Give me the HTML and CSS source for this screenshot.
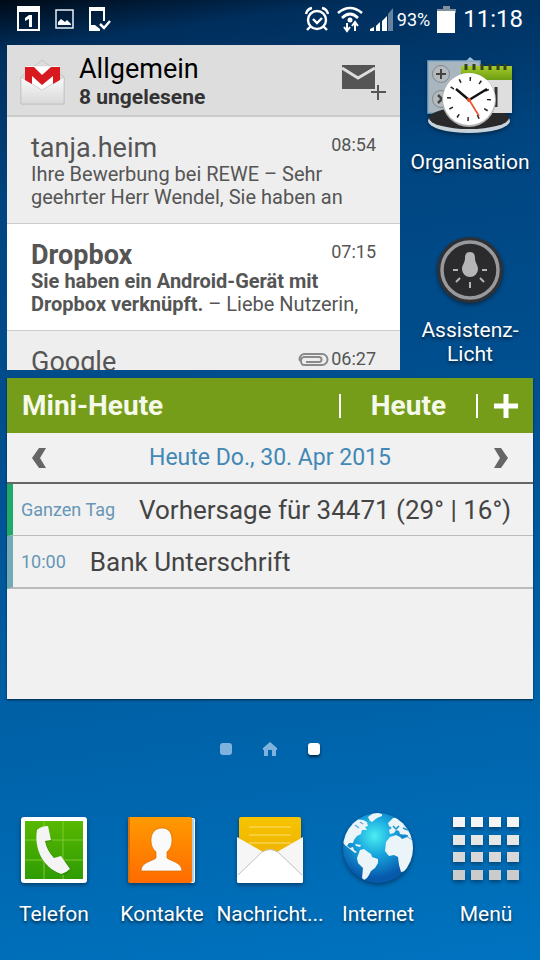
FILE: index.html
```html
<!DOCTYPE html>
<html lang="de">
<head>
<meta charset="utf-8">
<meta name="viewport" content="width=device-width, initial-scale=1">
<title>Startbildschirm</title>
<link rel="stylesheet" href="styles.css">
</head>

<body>

<header class="statusBar">
<div class="statusLeft">
<svg width="24" height="26" viewBox="0 0 24 26"><rect x="1" y="1" width="21" height="23" fill="none" stroke="#fff" stroke-width="2"/><path d="M0 0h23v6H0z" fill="#fff"/><path d="M8 12l4-3h3v12h-3v-8l-4 2z" fill="#fff"/></svg>
<svg width="20" height="20" viewBox="0 0 20 20"><rect x="1" y="1" width="17" height="18" fill="none" stroke="#e6f0f8" stroke-width="1.5"/><path d="M3 16v-3l3-3 4 3 2-2 4 4v1z" fill="#fff"/></svg>
<svg width="22" height="25" viewBox="0 0 22 25"><path d="M1 1h14v13M1 1v21h9" fill="none" stroke="#fff" stroke-width="2"/><path d="M0 0h16v4H0zM0 18h6l5 4v2H0z" fill="#fff"/><path d="M11 17l4 4 6-7" fill="none" stroke="#fff" stroke-width="2.5"/></svg>
</div>
<div class="statusRight">
<svg width="26" height="26" viewBox="0 0 26 26" fill="none" stroke="#fff" stroke-width="2.4"><circle cx="13" cy="14" r="9"/><path d="M9 13l4 4 5-5M2 8q1-5 6-6M24 8q-1-5-6-6M7 20l-4 4M19 20l4 4"/></svg>
<svg width="26" height="28" viewBox="0 0 26 28" fill="none" stroke="#fff" stroke-width="2.6"><path d="M1 8q12-10 24 0M5 13q8-8 16 0"/><circle cx="13" cy="15" r="2.500" fill="#fff" stroke="none"/><path d="M10 18v8M7 22l3 4 3-4M18 26v-9M15 21l3-4 3 4" stroke-width="2"/></svg>
<svg class="signal" width="24" height="25" viewBox="0 0 24 25" fill="#fff"><path d="M0 22l4-2v4H0zM6 19l4-4v9H6zM12 14l5-5v15h-5z"/><path d="M18 7l5-6v23h-5z" opacity=".4"/></svg>
<span class="percent">93%</span>
<svg class="battery" width="19" height="27" viewBox="0 0 19 27"><path d="M6 0h7v3h6v4H0V3h6z" fill="#7f8f9c"/><path d="M0 5h18v22H0z" fill="#fff"/></svg>
<time class="clock">11:18</time>
</div>
</header>

<main class="home">

<div class="topRow">
<section class="mailWidget">
<div class="mailHeader">
<svg width="46" height="46" viewBox="0 0 46 46">
<defs><linearGradient id="env" x1="0" y1="0" x2="0" y2="1"><stop offset="0" stop-color="#fafafa"/><stop offset="1" stop-color="#d8d8d8"/></linearGradient></defs>
<path d="M1 18L22 1l22 17v27H1z" fill="#dcdcdc" stroke="#c4c4c4"/>
<path d="M5 7h35v17L22 34 5 24z" fill="#fff" stroke="#ccc" stroke-width=".5"/>
<path d="M1 18l21 13 22-13v27H1z" fill="url(#env)" stroke="#c0c0c0" stroke-width=".7"/>
<path d="M5 8h9l8 8 9-8h9v13l-7 4v-8l-11 9-10-9v8l-7-4z" fill="#d8191f"/>
</svg>
<div class="mailTitle">
<h1>Allgemein</h1>
<p>8 ungelesene</p>
</div>
<button class="plain compose" aria-label="Neue E-Mail">
<svg width="45" height="36" viewBox="0 0 45 36"><path d="M0 1h33v24H0z" fill="#555"/><path d="M0 4l16 10L33 4" fill="none" stroke="#ddd" stroke-width="3"/><path d="M36 20v16M28 28h16" stroke="#ddd" stroke-width="5"/><path d="M36 21v15M29 28h15" stroke="#555" stroke-width="2"/></svg>
</button>
</div>
<ul class="mailList">
<li class="mail">
<div class="mailTop"><span class="sender">tanja.heim</span><time>08:54</time></div>
<p>Ihre Bewerbung bei REWE – Sehr geehrter Herr Wendel, Sie haben an</p>
</li>
<li class="mail unread">
<div class="mailTop"><span class="sender">Dropbox</span><time>07:15</time></div>
<p><b>Sie haben ein Android-Gerät mit Dropbox verknüpft.</b> – Liebe Nutzerin,</p>
</li>
<li class="mail">
<div class="mailTop"><span class="sender">Google</span>
<svg width="31" height="13" viewBox="0 0 31 13" fill="none" stroke="#8a8a8a" stroke-width="2"><path d="M8 9h13a2 2 0 0 0 0-5H6a3 4 0 0 0 0 8h18a5 5 0 0 0 0-11H6a5 5 0 0 0-4 7"/></svg>
<time>06:27</time></div>
</li>
</ul>
</section>

<nav class="sideApps">
<button class="plain app">
<svg width="88" height="80" viewBox="0 0 88 80">
<defs><linearGradient id="green" x1="0" y1="0" x2="0" y2="1"><stop offset="0" stop-color="#a6cc2b"/><stop offset="1" stop-color="#6c9c10"/></linearGradient></defs>
<path d="M40 5l4-4 5 4z" fill="#9fc0da"/>
<rect x="2" y="5" width="52" height="52" fill="#a9b6bf" stroke="#7fa8c6" stroke-width="1.5"/>
<circle cx="15" cy="18" r="8.500" fill="#b4babd" stroke="#81898d"/><path d="M15 13v10M10 18h10" stroke="#444" stroke-width="2"/>
<circle cx="15" cy="43" r="8.500" fill="#b4babd" stroke="#81898d"/><path d="M12 39l4 4-4 4" fill="none" stroke="#444" stroke-width="2.500"/>
<ellipse cx="43" cy="65" rx="41" ry="12" fill="#c7d2da"/><ellipse cx="43" cy="62" rx="40" ry="11" fill="#29292c"/>
<path d="M44 20h42v37H44z" fill="#dedede"/><path d="M35 10h51v14H35z" fill="url(#green)"/>
<path d="M40 8v6M48 8v6M56 8v6M64 8v6M72 8v6M79 8v6" stroke="#35431a" stroke-width="3"/>
<path d="M70 31v20" stroke="#333" stroke-width="3"/>
<circle cx="43" cy="44" r="27" fill="#b2b2b2"/><circle cx="43" cy="43" r="26" fill="#fff"/>
<circle cx="43" cy="43" r="20" fill="none" stroke="#222" stroke-width="4" stroke-dasharray="1.500 8.970"/>
<path d="M30 33l13 11 18-11" fill="none" stroke="#111" stroke-width="2.400"/><path d="M42 42l11 18" stroke="#e9502c" stroke-width="1.600"/><circle cx="43" cy="44" r="2" fill="#e9502c"/>
</svg>
<span>Organisation</span>
</button>
<button class="plain app">
<svg width="68" height="68" viewBox="0 0 68 68">
<circle cx="34" cy="34" r="33" fill="#2f3034"/><circle cx="34" cy="34" r="28" fill="#2b2b2e" stroke="#97999c" stroke-width="3.500"/>
<path d="M34 16c-4 0-5 3-5 6 0 5-3 7-3 11a8 8 0 0 0 16 0c0-4-3-6-3-11 0-3-1-6-5-6z" fill="#b5b5b8"/>
<path d="M17 34h5M46 34h5M20 46l4-4M48 46l-4-4M34 46v6" stroke="#b5b5b8" stroke-width="2"/>
</svg>
<span>Assistenz-<br>Licht</span>
</button>
</nav>
</div>

<section class="agenda">
<div class="agendaHeader">
<h2>Mini-Heute</h2>
<button class="plain today">Heute</button>
<button class="plain add" aria-label="Neuer Termin"><svg width="24" height="24" viewBox="0 0 24 24"><path d="M12 0v24M0 12h24" stroke="#fff" stroke-width="5"/></svg></button>
</div>
<div class="agendaNav">
<button class="plain" aria-label="Zurück"><svg width="14" height="20" viewBox="0 0 14 20"><path d="M7 0h7L8 10l6 10H7L0 10z" fill="#666"/></svg></button>
<span>Heute Do., 30. Apr 2015</span>
<button class="plain" aria-label="Weiter"><svg width="14" height="20" viewBox="0 0 14 20"><path d="M7 0H0l6 10-6 10h7l7-10z" fill="#666"/></svg></button>
</div>
<ul class="events">
<li class="weather"><small>Ganzen Tag</small><span>Vorhersage für 34471 (29° | 16°)</span></li>
<li class="bank"><small>10:00</small><span>Bank Unterschrift</span></li>
</ul>
</section>

<div class="pager">
<span class="dot"></span>
<svg width="14" height="14" viewBox="0 0 14 14"><path d="M7 0l7 6v2h-1v6H9V8H5v6H1V8H0V6z" fill="#7fb2dc"/></svg>
<span class="dot current"></span>
</div>

<nav class="dock">
<button class="plain app">
<svg width="68" height="68" viewBox="0 0 68 68">
<defs><linearGradient id="call" x1="0" y1="0" x2="0" y2="1"><stop offset="0" stop-color="#58b800"/><stop offset="1" stop-color="#2f9c04"/></linearGradient></defs>
<rect x="1" y="1" width="66" height="66" rx="3" fill="#fff"/><path d="M5 5h58v58H5z" fill="url(#call)"/>
<path d="M24 5v58M43 5v58M5 24h58M5 44h58" stroke="#7ccb30" stroke-width="1"/>
<path d="M18 14q4-3 9-4l5 15-6 1q2 10 9 16l7-1 9 12q-4 6-9 6C24 53 14 34 18 14z" fill="#1d7200" opacity=".5"/>
<path d="M17 14q4-4 11-4l3 14-6 1q2 10 9 17l7-2 9 13q-4 4-9 5C22 51 14 32 17 14z" fill="#f4f4f4"/>
</svg>
<span>Telefon</span>
</button>
<button class="plain app">
<svg width="68" height="68" viewBox="0 0 68 68">
<defs><linearGradient id="book" x1="0" y1="0" x2="0" y2="1"><stop offset="0" stop-color="#ff9a00"/><stop offset="1" stop-color="#ff6b00"/></linearGradient></defs>
<rect x="4" y="2" width="63" height="65" rx="2" fill="#fff"/><path d="M65 3v63" stroke="#5ba2d2"/>
<rect x="0" y="1" width="64" height="66" rx="2" fill="url(#book)"/><path d="M1 2v64" stroke="#d9700a" stroke-width="2"/>
<path d="M34 12c7 0 10 5 10 12 0 6-2 9-5 12v6c3 3 15 4 15 13H13c0-9 12-10 15-13v-6c-3-3-5-6-5-12 0-7 4-12 11-12z" fill="#fafafa" stroke="#d66a00" stroke-width=".7"/>
</svg>
<span>Kontakte</span>
</button>
<button class="plain app">
<svg width="68" height="68" viewBox="0 0 68 68">
<defs><linearGradient id="sms" x1="0" y1="0" x2="0" y2="1"><stop offset="0" stop-color="#f6c400"/><stop offset="1" stop-color="#eeb000"/></linearGradient></defs>
<rect x="3" y="1" width="62" height="45" rx="2" fill="url(#sms)"/><path d="M13 11h42M13 19h42M13 27h42" stroke="#f9df73"/>
<path d="M1 21l26 15q7-4 14 0l26-15v44q0 2-2 2H3q-2 0-2-2z" fill="#f6f6f6"/>
<path d="M1 61l25-24q8-6 16 0l25 24v4q0 2-2 2H3q-2 0-2-2z" fill="#fff"/>
<path d="M2 59l24-23q8-5 16 0l24 23" fill="none" stroke="#c4c4c4"/>
</svg>
<span>Nachricht...</span>
</button>
<button class="plain app">
<svg width="72" height="72" viewBox="0 0 72 72">
<defs><radialGradient id="sea" cx=".45" cy=".33" r=".6"><stop offset="0" stop-color="#4aeef2"/><stop offset=".45" stop-color="#18a6de"/><stop offset="1" stop-color="#0759ac"/></radialGradient><clipPath id="ball"><circle cx="36" cy="36" r="35"/></clipPath></defs>
<circle cx="36" cy="36" r="35" fill="url(#sea)"/>
<g clip-path="url(#ball)" fill="#eaf4f9">
<path d="M0 30l4-14 9-9 8 1 4 2 1 4-3 1 2 3-5 0-1 4-4 2-3 4-1 3-4 0-2 3 3 2 3-1 1 3 3 2-2 1-5-4-4-3z"/>
<path d="M13 32l6 1-1 2-4-1z"/>
<path d="M26 5l7-5 7 2 0 2-5 2-5 4-2-1z"/>
<path d="M18 38l4-1 4 3 3 2 1 3 6 2 0 4-3 5-4 3-2 4-2 3-3 2-2-2 1-10-5-5-1-5z"/>
<path d="M46 11l5-5 7-1 12 16 2 8-6-4-3-2-5-1-1-3-3-1-2 3-4 1-1-4 3-2-3-2z"/>
<path d="M44 30l4-5 6-2 4 2 2 2 5-2 7 4 0 16-8 14-5 1-2-7-1-8-4-2-5 1-4-5z"/>
</g>
<path d="M51 14l3 3 3-3M61 16l5 2M62 23l4 1" fill="none" stroke="#1593cf" stroke-width="1.500"/>
<path d="M13 13l4 3M18 10l3 2" stroke="#5db2dc" stroke-width="1.500"/>
</svg>
<span>Internet</span>
</button>
<button class="plain app">
<svg width="68" height="68" viewBox="0 0 68 68">
<g stroke-width="10" stroke-dasharray="12 6"><path d="M1 6h68" stroke="#f5f5f5"/><path d="M1 24h68" stroke="#e6e6e6"/><path d="M1 41h68" stroke="#d8d8d8"/><path d="M1 59h68" stroke="#cbcbcb"/></g>
</svg>
<span>Menü</span>
</button>
</nav>

</main>

</body>
</html>
```
FILE: styles.css
```css
* {
    box-sizing: border-box;
}
body {
    margin: 0;
    min-height: 100vh;
    font-family: Roboto, sans-serif;
    color: #fff;
    background: linear-gradient(172deg, #000a16 0, #002e5c 5%, #004580 20%, #005091 45%, #0064ab 75%, #0073c0 100%);
    display: flex;
    flex-direction: column;
}
h1, h2, p, ul {
    margin: 0;
    padding: 0;
}
ul {
    list-style: none;
}
svg {
    display: block;
    flex: none;
}
button.plain {
    font: inherit;
    color: inherit;
    background: none;
    border: 0;
    padding: 0;
    cursor: pointer;
}

/* Status bar */
.statusBar {
    display: flex;
    justify-content: space-between;
    align-items: center;
    height: 38px;
    padding: 0 17px;
}
.statusLeft, .statusRight {
    display: flex;
    align-items: center;
}
.statusLeft {
    gap: 14px;
}
.statusRight {
    gap: 7px;
}
.signal {
    margin-right: -4px;
}
.percent {
    font-size: 18px;
}
.clock {
    font-size: 24px;
}

.home {
    flex: 1;
    display: flex;
    flex-direction: column;
    padding-top: 7px;
}
.topRow {
    display: grid;
    grid-template-columns: 1fr 140px;
    padding-left: 7px;
}

/* Mail widget */
.mailWidget {
    height: 325px;
    overflow: hidden;
    background: #eee;
    color: #555;
}
.mailHeader {
    display: flex;
    align-items: center;
    gap: 13px;
    height: 72px;
    padding: 4px 13px 0;
    background: #ddd;
    border-bottom: 2px solid #ccc;
}
.mailTitle {
    flex: 1;
}
.mailTitle h1 {
    font-size: 27px;
    font-weight: 400;
    line-height: 30px;
    color: #000;
}
.mailTitle p {
    font-size: 21px;
    font-weight: 700;
    line-height: 26px;
    color: #333;
}
.mail {
    padding: 16px 24px 14px;
    border-bottom: 1px solid #ccc;
}
.mail p {
    font-size: 20px;
    line-height: 23px;
}
.mailTop {
    display: flex;
    align-items: center;
    line-height: 30px;
}
.sender {
    flex: 1;
    font-size: 27px;
}
.mailTop time {
    font-size: 18px;
    line-height: 24px;
    padding-bottom: 6px;
    margin-left: 2px;
}
.mailTop svg {
    margin-bottom: 6px;
}
.unread {
    background: #fff;
}
.unread .sender {
    font-weight: 700;
}

/* App shortcuts */
button.app {
    display: flex;
    flex-direction: column;
    align-items: center;
    font-size: 21px;
    line-height: 24px;
    text-shadow: 0 2px 3px rgba(0, 0, 0, 0.6);
}
.app svg {
    filter: drop-shadow(0 2px 2px rgba(0, 0, 0, 0.4));
}
.sideApps {
    display: flex;
    flex-direction: column;
    gap: 62px;
    padding-top: 11px;
}
.sideApps .app {
    gap: 14px;
}

/* Agenda widget */
.agenda {
    margin: 8px 7px 0;
    min-height: 321px;
    background: #f1f1f1;
    color: #444;
    box-shadow: 0 1px 2px rgba(0, 0, 0, 0.6);
}
.agendaHeader {
    display: flex;
    align-items: center;
    height: 55px;
    padding: 0 15px;
    background: #759d1a;
    color: #f5f9ea;
}
.agendaHeader h2, button.today {
    font-size: 28px;
    font-weight: 700;
}
.agendaHeader h2 {
    flex: 1;
}
button.today {
    line-height: 24px;
    padding: 0 30px;
    border-left: 2px solid #fff;
    border-right: 2px solid #fff;
}
button.add {
    padding-left: 16px;
}
.agendaNav {
    display: flex;
    align-items: center;
    justify-content: space-between;
    height: 51px;
    padding: 0 25px;
    border-bottom: 2px solid #666;
    font-size: 23px;
    color: #4387b5;
}
.events li {
    display: flex;
    align-items: center;
    gap: 24px;
    height: 52px;
    padding-left: 8px;
    border-left: 6px solid #1faa6a;
    border-bottom: 1px solid #bbb;
}
.events small {
    font-size: 18px;
    color: #6796b6;
}
.events span {
    font-size: 26px;
}
.events li.bank {
    height: 53px;
    border-left-color: #72abb5;
    border-bottom-width: 2px;
}

/* Page indicator */
.pager {
    display: flex;
    justify-content: center;
    align-items: center;
    gap: 31px;
    margin-top: 43px;
}
.dot {
    width: 12px;
    height: 12px;
    border-radius: 3px;
    background: #7fb2dc;
}
.current {
    background: #fff;
    box-shadow: 0 2px 3px rgba(0, 0, 0, 0.6);
}

/* Dock */
.dock {
    display: grid;
    grid-template-columns: repeat(5, 1fr);
    margin-top: auto;
    padding-bottom: 34px;
}
.dock .app {
    justify-content: flex-end;
    gap: 18px;
}
```
